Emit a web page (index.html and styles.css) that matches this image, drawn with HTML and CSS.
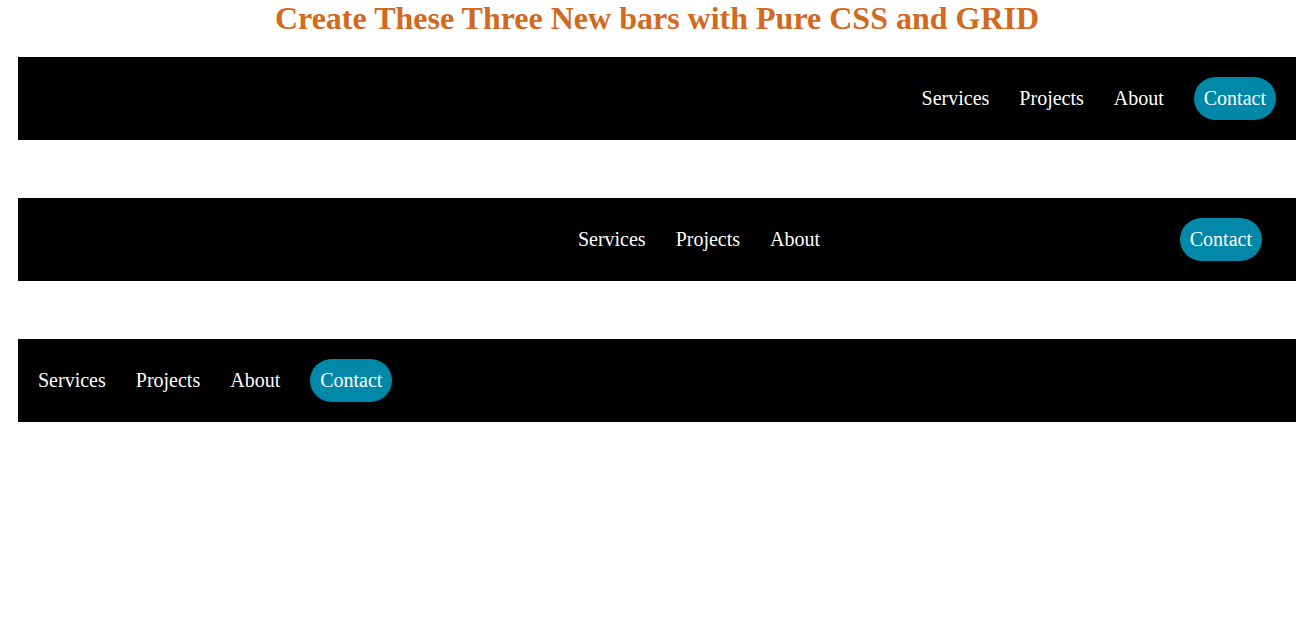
FILE: index.html
```html
<!DOCTYPE html>
<html lang="en">
<head>
<meta charset="utf-8">
<title>Three bars</title>
<link rel="stylesheet" href="styles.css">
</head>
<body>
<h1 class="title">Create These Three New bars with Pure CSS and GRID</h1>
<div class="bars">
  <nav class="bar bar-right">
    <a class="link" href="#">Services</a>
    <a class="link" href="#">Projects</a>
    <a class="link" href="#">About</a>
    <a class="link contact" href="#">Contact</a>
  </nav>
  <nav class="bar bar-center">
    <span class="spacer"></span>
    <div class="group">
      <a class="link" href="#">Services</a>
      <a class="link" href="#">Projects</a>
      <a class="link" href="#">About</a>
    </div>
    <a class="link contact contact-end" href="#">Contact</a>
  </nav>
  <nav class="bar bar-left">
    <a class="link" href="#">Services</a>
    <a class="link" href="#">Projects</a>
    <a class="link" href="#">About</a>
    <a class="link contact" href="#">Contact</a>
  </nav>
</div>
</body>
</html>
```
FILE: styles.css
```css
html, body {
  background: #fff;
}
body {
  margin: 0 17px 0 18px;
  font-family: "Liberation Serif", "Times New Roman", serif;
}
.title {
  margin: 0 0 21px;
  text-align: center;
  font-size: 32px;
  font-weight: bold;
  color: #d2691e;
  line-height: 36px;
}
.bars {
  display: flex;
  flex-direction: column;
  gap: 58px;
}
.bar {
  background: #000;
  padding: 10px;
  height: 83px;
  box-sizing: border-box;
  align-items: center;
}
.link {
  color: #fff;
  text-decoration: none;
  font-size: 20px;
  line-height: 23px;
  padding: 10px;
  display: block;
}
.contact {
  background: #0088a9;
  border-radius: 22px;
  margin: 0 10px;
}
.bar-right {
  display: grid;
  grid-auto-flow: column;
  justify-content: end;
  column-gap: 10px;
}
.bar-left {
  display: grid;
  grid-auto-flow: column;
  justify-content: start;
  column-gap: 10px;
}
.bar-center {
  display: grid;
  grid-template-columns: 540fr auto 456fr;
}
.group {
  display: grid;
  grid-auto-flow: column;
  column-gap: 10px;
}
.contact-end {
  justify-self: end;
  margin: 0 24px 0 0;
}
```
